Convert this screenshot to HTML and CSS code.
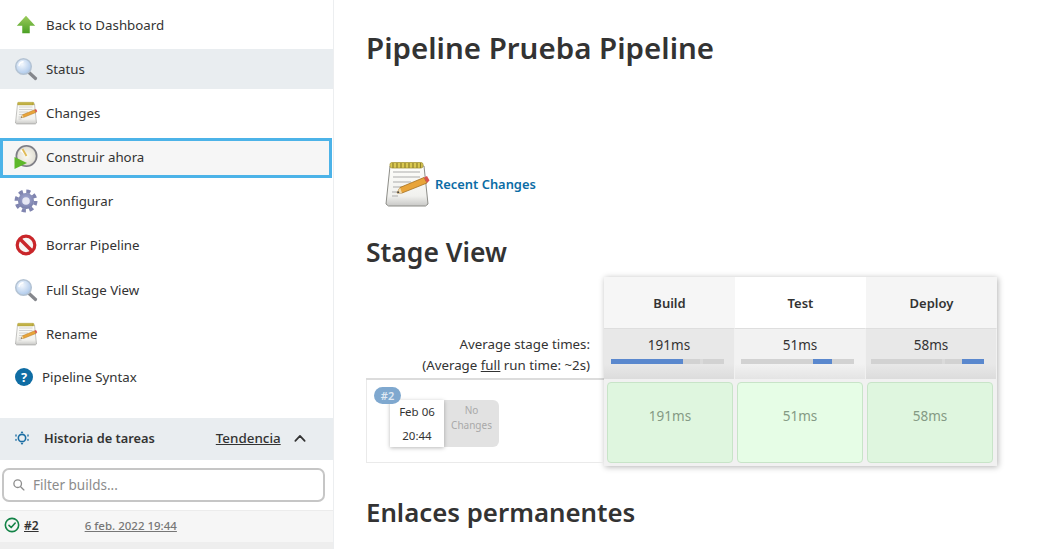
FILE: index.html
```html
<!DOCTYPE html>
<html lang="es">
<head>
<meta charset="utf-8">
<title>Pipeline Prueba Pipeline</title>
<link rel="stylesheet" href="styles.css">
</head>
<body>
<svg class="sprite" width="0" height="0" aria-hidden="true">
  <defs>
    <linearGradient id="gGreen" x1="0" y1="0" x2="0" y2="1"><stop offset="0" stop-color="#9ccb5c"/><stop offset="1" stop-color="#4aa024"/></linearGradient>
    <radialGradient id="gGlass" cx=".4" cy=".35" r=".7"><stop offset="0" stop-color="#f4f8fd"/><stop offset="1" stop-color="#a9c6ea"/></radialGradient>
    <linearGradient id="gPad" x1="0" y1="0" x2="0" y2="1"><stop offset="0" stop-color="#fdfdfa"/><stop offset=".75" stop-color="#f1f1ee"/><stop offset="1" stop-color="#c8c8c6"/></linearGradient>
    <radialGradient id="gClock" cx=".5" cy=".5" r=".55"><stop offset="0" stop-color="#fbfaf2"/><stop offset=".75" stop-color="#e4e2d8"/><stop offset="1" stop-color="#8a8a92"/></radialGradient>
    <radialGradient id="gGear" cx=".5" cy=".4" r=".6"><stop offset="0" stop-color="#a9aed8"/><stop offset="1" stop-color="#767da8"/></radialGradient>
    <symbol id="i-up" viewBox="0 0 24 24">
      <path d="M12 1 23 13H16.500V22H7.500V13H1Z" fill="url(#gGreen)"/>
    </symbol>
    <symbol id="i-search" viewBox="0 0 24 24">
      <path d="M14.500 15 21.500 21.500" stroke="#85878c" stroke-width="3.200" stroke-linecap="round"/>
      <circle cx="9.500" cy="9.500" r="7.800" fill="url(#gGlass)" stroke="#b4c3d3" stroke-width="1.500"/>
      <path d="M5 8.500A5 5 0 0 1 9 4.800" fill="none" stroke="#fff" stroke-width="1.400" stroke-linecap="round"/>
    </symbol>
    <symbol id="i-notepad" viewBox="0 0 48 48">
      <path d="M5.500 46 3 44 7 6 41 6 45 44 42.500 46Z" fill="url(#gPad)" stroke="#8d8d88" stroke-width="1"/>
      <rect x="7" y="2.500" width="33" height="5.500" rx="2" fill="#d9c850" stroke="#a8983a" stroke-width=".8"/>
      <path d="M10 3V8M14 3V8M18 3V8M22 3V8M26 3V8M30 3V8M34 3V8M37.500 3V8" stroke="#8e7f2c" stroke-width="1.200"/>
      <path d="M10 12H37M10 17H37M10 22H28M10 27H24M9 32H18M9 36H15" stroke="#ababab" stroke-width="1"/>
      <path d="M14 33 17 27.500 41 17.500 44 23 19 33Z" fill="#e8a43a" stroke="#a5701f" stroke-width=".8"/>
      <path d="M14 33 17 27.500 19 33Z" fill="#f0d9a8"/>
      <path d="M14 33 15.200 30.800 16.500 33Z" fill="#444"/>
      <path d="M41 17.500 44 16 46.500 20.500 44 23Z" fill="#d9534f"/>
    </symbol>
    <symbol id="i-clock" viewBox="0 0 24 24">
      <circle cx="12.500" cy="11" r="10.200" fill="url(#gClock)" stroke="#7d7d85" stroke-width="1.600"/>
      <path d="M12.500 11 8.500 4 6 6Z" fill="#fff"/>
      <path d="M12.500 11 8.500 4" stroke="#e1bb55" stroke-width="1.800"/>
      <path d="M.5 12 13 18 .5 24Z" fill="#5db82a"/>
    </symbol>
    <symbol id="i-gear" viewBox="0 0 24 24">
      <circle cx="12" cy="12" r="8" fill="url(#gGear)"/>
      <circle cx="12" cy="12" r="9.600" fill="none" stroke="#8085b0" stroke-width="3.800" stroke-dasharray="4.100 3.440"/>
      <circle cx="12" cy="12" r="3.800" fill="#e6e7f4"/>
    </symbol>
    <symbol id="i-no" viewBox="0 0 24 24">
      <circle cx="12" cy="12" r="8.800" fill="#f7f5f3" stroke="#c9262a" stroke-width="3.200"/>
      <path d="M6 6 18 18" stroke="#c9262a" stroke-width="3.600"/>
    </symbol>
    <symbol id="i-help" viewBox="0 0 24 24">
      <circle cx="12" cy="12" r="12" fill="#0f6da4"/>
      <text x="12" y="18" text-anchor="middle" class="help-mark">?</text>
    </symbol>
    <symbol id="i-history" viewBox="0 0 24 24" fill="none">
      <circle cx="12" cy="12" r="5.500" stroke="#1a6da3" stroke-width="2.400"/>
      <path d="M12 1.500 14 4.500H10ZM12 22.500 10 19.500H14Z" fill="#1a6da3"/>
      <path d="M3 7.500 3 10M3 14 3 16.500M21 7.500 21 10M21 14 21 16.500" stroke="#1a6da3" stroke-width="2" stroke-linecap="round" stroke-dasharray="1.500 2"/>
    </symbol>
    <symbol id="i-lens" viewBox="0 0 24 24" fill="none">
      <circle cx="10.500" cy="10.500" r="7" stroke="#8d8d8d" stroke-width="2.400"/>
      <path d="M16 16 22 22" stroke="#8d8d8d" stroke-width="2.400" stroke-linecap="round"/>
    </symbol>
    <symbol id="i-check" viewBox="0 0 24 24" fill="none">
      <circle cx="12" cy="12" r="10" stroke="#138347" stroke-width="2.400"/>
      <path d="M7.500 12.500 10.800 15.800 16.800 9" stroke="#138347" stroke-width="2.400" stroke-linecap="round" stroke-linejoin="round"/>
    </symbol>
    <symbol id="i-chevron" viewBox="0 0 24 24" fill="none">
      <path d="M4 17 12 8.500 20 17" stroke="#333" stroke-width="3" stroke-linecap="round" stroke-linejoin="round"/>
    </symbol>
  </defs>
</svg>

<div class="page">
  <aside class="sidebar">
    <nav class="tasks">
      <a class="task"><span class="task-icon"><svg class="ic-up"><use href="#i-up"/></svg></span><span class="task-label">Back to Dashboard</span></a>
      <a class="task task-active"><span class="task-icon"><svg class="ic"><use href="#i-search"/></svg></span><span class="task-label">Status</span></a>
      <a class="task"><span class="task-icon"><svg class="ic"><use href="#i-notepad"/></svg></span><span class="task-label">Changes</span></a>
      <a class="task task-focus"><span class="task-icon"><svg class="ic"><use href="#i-clock"/></svg></span><span class="task-label">Construir ahora</span></a>
      <a class="task"><span class="task-icon"><svg class="ic"><use href="#i-gear"/></svg></span><span class="task-label">Configurar</span></a>
      <a class="task"><span class="task-icon"><svg class="ic"><use href="#i-no"/></svg></span><span class="task-label">Borrar Pipeline</span></a>
      <a class="task"><span class="task-icon"><svg class="ic"><use href="#i-search"/></svg></span><span class="task-label">Full Stage View</span></a>
      <a class="task"><span class="task-icon"><svg class="ic"><use href="#i-notepad"/></svg></span><span class="task-label">Rename</span></a>
      <a class="task task-small"><span class="task-icon-small"><svg class="ic-help"><use href="#i-help"/></svg></span>Pipeline Syntax</a>
    </nav>
    <section class="history">
      <header class="history-head">
        <svg class="ic-history"><use href="#i-history"/></svg>
        <span class="history-title">Historia de tareas</span>
        <a class="trend">Tendencia</a>
        <svg class="ic-chevron"><use href="#i-chevron"/></svg>
      </header>
      <div class="filter">
        <svg class="ic-lens"><use href="#i-lens"/></svg>
        <span class="filter-text">Filter builds...</span>
      </div>
      <div class="build-row">
        <svg class="ic-check"><use href="#i-check"/></svg>
        <a class="build-num">#2</a>
        <a class="build-date">6 feb. 2022 19:44</a>
      </div>
      <div class="build-foot"></div>
    </section>
  </aside>

  <main class="main">
    <h1 class="title">Pipeline Prueba Pipeline</h1>
    <div class="recent">
      <svg class="ic-recent"><use href="#i-notepad"/></svg>
      <a class="recent-link">Recent Changes</a>
    </div>
    <h2 class="section section-stage">Stage View</h2>
    <div class="stage">
      <div class="stage-left">
        <div class="avg-label">
          <div>Average stage times:</div>
          <div>(Average <u>full</u> run time: ~2s)</div>
        </div>
        <div class="run">
          <span class="run-badge">#2</span>
          <div class="run-card">
            <div class="run-date"><span>Feb 06</span><span>20:44</span></div>
            <div class="run-changes">No<br>Changes</div>
          </div>
        </div>
      </div>
      <div class="stage-table">
        <div class="head">Build</div>
        <div class="head head-hover">Test</div>
        <div class="head head-alt">Deploy</div>
        <div class="avg">191ms<div class="bar bar-a"><span class="bar-fill" style="width:72px"></span><span class="bar-tick" style="margin-left:17px"></span></div></div>
        <div class="avg avg-hover">51ms<div class="bar bar-b"><span class="bar-fill" style="margin-left:72px;width:19px"></span></div></div>
        <div class="avg">58ms<div class="bar bar-c"><span class="bar-tick" style="margin-left:71px"></span><span class="bar-fill" style="margin-left:17px;width:22px"></span></div></div>
        <div class="cell-wrap cell-a"><div class="cell">191ms</div></div>
        <div class="cell-wrap cell-b"><div class="cell cell-hover">51ms</div></div>
        <div class="cell-wrap cell-c"><div class="cell">58ms</div></div>
      </div>
    </div>
    <h2 class="section section-links">Enlaces permanentes</h2>
  </main>
</div>
</body>
</html>
```

FILE: styles.css
```css
* { box-sizing: border-box; }
html, body { margin: 0; height: 549px; overflow: hidden; background: #fff; }
body { font-family: "Noto Sans", sans-serif; color: #333; font-size: 14px; }
.sprite { display: block; height: 0; }
.page { display: flex; height: 549px; }

/* Sidebar */
.sidebar { width: 334px; flex: none; border-right: 1px solid #eceef0; padding-top: 5px; }
.tasks { display: flex; flex-direction: column; gap: 4.2px; }
.task { display: flex; align-items: center; height: 40px; padding: 0 0 1px 14px; font-size: 13.3px; color: #333; }
.task-active { background: #e9edf0; }
.task-focus { background: #f6f6f6; outline: 3px solid #4cb3e8; outline-offset: -3px; margin-right: 1px; }
.task-icon { width: 32px; flex: none; display: flex; }
.ic { width: 24px; height: 24px; display: block; }
.ic-up { width: 20px; height: 20px; margin: 0 0 0 2px; display: block; }
.task-small { padding: 0 0 3px 15px; }
.task-icon-small { width: 27px; flex: none; display: flex; }
.ic-help { width: 18px; height: 18px; display: block; }
.help-mark { font: 700 17px "Noto Sans", sans-serif; fill: #fff; }

.history { margin-top: 19px; }
.history-head { display: flex; align-items: center; height: 42px; padding: 0 0 1px 14px; background: #e9edf0; }
.ic-history { width: 16px; height: 16px; flex: none; }
.history-title { font-size: 12.8px; font-weight: 600; margin-left: 14px; color: #333; }
.trend { font-size: 13.4px; font-weight: 500; text-decoration: underline; margin-left: 61px; color: #333; }
.ic-chevron { width: 14px; height: 14px; margin-left: 12px; }
.filter { display: flex; align-items: center; height: 34px; margin: 8px 8px 8px 2px; border: 2px solid #c6c6c6; border-radius: 7px; padding-left: 8px; }
.ic-lens { width: 13px; height: 13px; flex: none; }
.filter-text { margin-left: 8px; font-size: 13.500px; color: #8c8c8c; }
.build-row { display: flex; align-items: center; height: 32px; padding-bottom: 2px; background: #f6f6f6; border-top: 1px solid #ececec; padding-left: 4px; }
.ic-check { width: 16px; height: 16px; flex: none; }
.build-num { margin-left: 4px; font-size: 12px; font-weight: 600; text-decoration: underline; color: #333; }
.build-date { margin-left: 46px; font-size: 11.500px; font-weight: 500; text-decoration: underline; color: #777; }
.build-foot { height: 8px; background: #eeeeee; }

/* Main */
.main { flex: 1; padding-left: 32px; min-width: 0; }
.title { margin: 27px 0 0; font-size: 29.5px; line-height: 42px; font-weight: 600; color: #333; }
.recent { display: flex; align-items: center; margin: 91px 0 0 17px; height: 48px; }
.ic-recent { width: 48px; height: 48px; flex: none; }
.recent-link { margin-left: 4px; font-size: 12.9px; font-weight: 600; color: #0b6ca5; }
.section { line-height: 36px; font-weight: 600; color: #333; }
.section-stage { margin: 26px 0 0; font-size: 26.5px; }
.section-links { margin: 28px 0 0; font-size: 25.8px; }

/* Stage view */
.stage { display: flex; margin-top: 7px; }
.stage-left { width: 238px; flex: none; display: flex; flex-direction: column; }
.avg-label { height: 103px; padding: 57px 14px 0 0; text-align: right; font-size: 13.3px; line-height: 21px; border-bottom: 2px solid #dcdcdc; }
.run { position: relative; height: 83px; border-left: 1px solid #eaeaea; border-bottom: 1px solid #eaeaea; padding: 20px 0 0 23px; }
.run-badge { position: absolute; left: 7px; top: 7px; width: 27px; height: 17px; border-radius: 9px; background: #7fa8cf; color: #dfe9f3; font-size: 11px; font-weight: 600; line-height: 17px; text-align: center; z-index: 1; }
.run-card { display: flex; height: 47px; width: 109px; }
.run-date { width: 54px; background: #fff; box-shadow: 0 1px 4px rgba(0,0,0,.28); display: flex; flex-direction: column; justify-content: space-between; align-items: center; padding: 3px 0 2px; font-size: 11.5px; line-height: 18px; position: relative; }
.run-changes { width: 55px; background: #e2e2e2; border-radius: 0 6px 6px 0; text-align: center; font-size: 10px; line-height: 15px; color: #a9a9a9; padding-top: 3px; }

.stage-table { display: grid; grid-template-columns: repeat(3, 131px); grid-template-rows: 51px 51px 87px; width: 393px; box-shadow: 1px 1px 6px rgba(0,0,0,.3); background: #f1f1f1; }
.head { display: flex; align-items: center; justify-content: center; font-size: 13px; font-weight: 600; background: #f6f6f6; color: #333; }
.head-hover { background: #fff; }
.head-alt { background: #f5f5f5; }
.avg { background: linear-gradient(#e8e8e8 0 70%, #dcdcdc 100%); border-top: 1px solid #dedede; text-align: center; font-size: 13.5px; line-height: 18px; padding-top: 7px; color: #333; border-right: 1px solid #f1f1f1; }
.avg-hover { background: linear-gradient(#f2f2f2 0 70%, #e4e4e4 100%); }
.bar { display: flex; width: 113px; height: 5px; background: #d2d2d2; margin-top: 5px; }
.bar-a { margin-left: 7px; }
.bar-b { margin-left: 6px; }
.bar-c { margin-left: 5px; }
.bar-fill { display: block; background: #5a88ce; height: 5px; }
.bar-tick { display: block; width: 3px; height: 5px; background: #dadada; }
.cell-wrap { padding-top: 3px; padding-bottom: 3px; background: #f1f1f1; }
.cell-a { padding-left: 3px; padding-right: 2px; }
.cell-b { padding-left: 2px; padding-right: 3px; }
.cell-c { padding-left: 1px; padding-right: 4px; }
.cell { height: 100%; display: flex; align-items: center; justify-content: center; padding-bottom: 14px; background: #dff6df; border: 1px solid #c8e4c8; border-radius: 4px; font-size: 13.5px; color: #849a84; }
.cell-hover { background: #e6fde6; }
```
